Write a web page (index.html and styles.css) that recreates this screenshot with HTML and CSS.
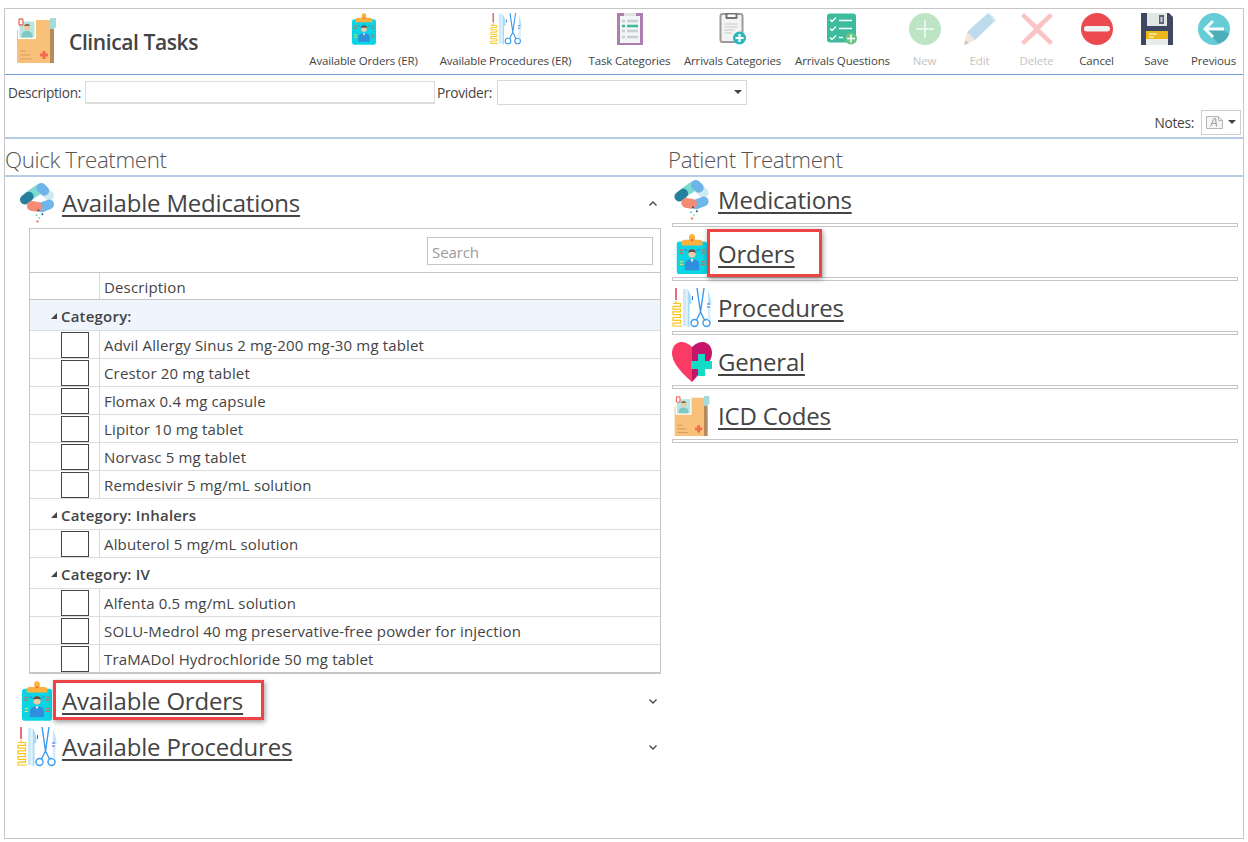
FILE: index.html
```html
<!DOCTYPE html>
<html lang="en">
<head>
<meta charset="utf-8">
<title>Clinical Tasks</title>
<link rel="stylesheet" href="styles.css">
</head>
<body>
<svg class="defs" width="0" height="0" aria-hidden="true">
  <symbol id="i-folder" viewBox="0 0 39 45">
    <path d="M0 12V45H37V16L33 2H17V12Z" fill="#f8c078"/>
    <path d="M33 2L37 0V45H33Z" fill="#b58a5c"/>
    <path d="M33 0H39V9L36.500 11L33 11Z" fill="#a3dcd8"/>
    <rect x="1" y="2" width="18" height="19" fill="#fff"/>
    <rect x="2.500" y="3.500" width="15" height="16" fill="#b9e6e0"/>
    <circle cx="10" cy="9" r="3" fill="#f3c9a0"/>
    <path d="M9 6a3 3 0 0 1 4 2l-6 0a3 3 0 0 1 2-2Z" fill="#8a6a4c"/>
    <path d="M4.500 19.500c0-5 2-6.500 5.500-6.500s5.500 1.500 5.500 6.500Z" fill="#7fc7c2"/>
    <rect x="2" y="1" width="4" height="6" rx="1" fill="#fff" stroke="#ef6a5a" stroke-width="1.300"/>
    <path d="M3 33h6M3 37h10M3 41h12" stroke="#d4a264" stroke-width="1.200"/>
    <path d="M23 37h8M27 33v8" stroke="#f56a4c" stroke-width="3"/>
  </symbol>
  <symbol id="i-badge" viewBox="0 0 32 42">
    <rect x="0" y="8" width="32" height="34" rx="3" fill="#0bd4e4"/>
    <path d="M13 3a3 3 0 0 1 6 0V6h5a3 3 0 0 1 3 3v3H5V9a3 3 0 0 1 3-3h5Z" fill="#fbb040"/>
    <circle cx="16" cy="6.500" r="1.200" fill="#f0603c"/>
    <circle cx="16" cy="21" r="3.800" fill="#f3cba8"/>
    <path d="M12 20a4 4 0 0 1 8 0c-2-1.500-6-1.500-8 0Z" fill="#665044"/>
    <path d="M8.500 38V32c0-3.500 3-5.500 7.500-5.500s7.500 2 7.500 5.500V38Z" fill="#2f8fdc"/>
    <path d="M14.500 26.500h3L16 30Z" fill="#fff"/>
    <path d="M2.500 17h4M2.500 20h4M25.500 17h4M25.500 20h4" stroke="#f0603c" stroke-width="1.300"/>
    <path d="M8 16l3 2M24 16l-3 2" stroke="#2f8fdc" stroke-width="1.200"/>
    <path d="M3 29h3.500M3 32h3.500" stroke="#fdd835" stroke-width="1.300"/>
    <path d="M25.500 29h4M25.500 32h4" stroke="#f0603c" stroke-width="1.300"/>
  </symbol>
  <symbol id="i-tools" viewBox="0 0 40 40">
    <path d="M4 0v12" stroke="#e8495a" stroke-width="1.600"/>
    <path d="M4 13v2.500H1M1 15.500h7.500v2.800H1v2.800h7.500v2.800H1v2.800h7.500v2.800H1v2.800h7.500v2.800H1V38h9" fill="none" stroke="#fcc419" stroke-width="1.200"/>
    <path d="M11 1h3.500v37H11Z" fill="#cfe9f8"/>
    <path d="M15.500 1c3 4 4 8 4 14l-2 2v22h-2Z" fill="#a8dcf6"/>
    <path d="M25 0l3.500 24M32 0l-3.500 24" stroke="#3b9bf0" stroke-width="1.400" fill="none"/>
    <path d="M28.500 24l-4 8M28.500 24l4 8" stroke="#3b9bf0" stroke-width="1.400"/>
    <circle cx="22.500" cy="35" r="3.500" fill="#fff" stroke="#3b9bf0" stroke-width="1.400"/>
    <circle cx="34.500" cy="35" r="3.500" fill="#fff" stroke="#3b9bf0" stroke-width="1.400"/>
    <path d="M36 2c2 6 3.500 10 3.500 15H36Z" fill="#bfe4f8"/>
    <path d="M36 18h2.500v14H36Z" fill="#d7eefa"/>
    <path d="M20.500 8v4M35 16h3M35 19h3" stroke="#3f6fd0" stroke-width="1"/>
  </symbol>
  <symbol id="i-clip" viewBox="0 0 26 32">
    <rect width="26" height="32" fill="#ac7fb0"/>
    <rect x="3" y="3" width="20" height="27" fill="#f2f4f5"/>
    <rect x="7" y="0" width="12" height="3" fill="#dfe3e6"/>
    <path d="M5 8h3M10 8h11M5 18h3M10 18h11M5 24h3M10 24h11" stroke="#c7cdd2" stroke-width="2.600"/>
    <path d="M5 13h3M10 13h11" stroke="#3db894" stroke-width="2.600"/>
  </symbol>
  <symbol id="i-doc" viewBox="0 0 27 32">
    <rect x="1" y="1" width="22" height="28" rx="2" fill="#f3f3f3" stroke="#9b9b9b" stroke-width="2"/>
    <path d="M6 0h12v5a1 1 0 0 1-1 1H7a1 1 0 0 1-1-1Z" fill="#6f7378"/>
    <rect x="8" y="1.500" width="8" height="2.500" fill="#fff"/>
    <path d="M5 11h13M5 14h13M5 17h10M5 20h7" stroke="#c9c9c9" stroke-width="1"/>
    <circle cx="20" cy="25" r="6.500" fill="#2bb7bd"/>
    <path d="M20 21v8M16 25h8" stroke="#fff" stroke-width="2.200"/>
  </symbol>
  <symbol id="i-check" viewBox="0 0 32 31">
    <rect width="29" height="29" rx="3" fill="#3dbb9d"/>
    <path d="M3 6l2 2 4-4M3 15l2 2 4-4M3 24l2 2 4-4" fill="none" stroke="#fff" stroke-width="1.300"/>
    <path d="M12 7h13M12 15h13M12 24h4" stroke="#fff" stroke-width="1.300"/>
    <circle cx="24" cy="25" r="6" fill="#6cc287"/>
    <path d="M24 21v8M20 25h8" stroke="#fff" stroke-width="1.500"/>
  </symbol>
  <symbol id="i-new" viewBox="0 0 32 32">
    <circle cx="16" cy="16" r="16" fill="#bde5c5"/>
    <path d="M16 7v18M7 16h18" stroke="#f2faf4" stroke-width="1.500"/>
  </symbol>
  <symbol id="i-edit" viewBox="0 0 32 32">
    <path d="M24 0l8 7L11 27 3 19Z" fill="#bcdcec"/>
    <path d="M3 19l8 8-11 5Z" fill="#f4e6da"/>
    <path d="M0 32l1.500-5 3.500 3.500Z" fill="#c9c9c9"/>
    <path d="M24 0l3 1.500 5 5.500-1.500 1.500Z" fill="#d6e9f2"/>
  </symbol>
  <symbol id="i-delete" viewBox="0 0 32 32">
    <path d="M3 0L16 12 29 0l3 3L19 16l13 13-3 3L16 20 3 32l-3-3L13 16 0 3Z" fill="#fbc4c4"/>
  </symbol>
  <symbol id="i-cancel" viewBox="0 0 32 32">
    <circle cx="16" cy="16" r="16" fill="#ed4a50"/>
    <rect x="3" y="13" width="26" height="5.500" rx="2.700" fill="#f2f2f2"/>
  </symbol>
  <symbol id="i-save" viewBox="0 0 32 32">
    <path d="M0 0h28l4 4v28H0Z" fill="#3f4860"/>
    <rect x="6" y="0" width="20" height="13" fill="#e2e7e6"/>
    <rect x="18" y="2" width="5" height="9" fill="#5a6278"/>
    <rect x="19.500" y="4" width="2" height="5" fill="#d0d4d8"/>
    <rect x="5" y="18" width="22" height="14" fill="#e8ecea"/>
    <rect x="5" y="18" width="22" height="8" fill="#ecb91a"/>
    <path d="M8 21h8M8 24h5" stroke="#fff" stroke-width="1.200"/>
  </symbol>
  <symbol id="i-prev" viewBox="0 0 32 32">
    <circle cx="16" cy="16" r="16" fill="#66ccd6"/>
    <path d="M8 16L20 30.500A16 16 0 0 0 31 21L24 16Z" fill="#4aafba"/>
    <path d="M15 8l-8 8 8 8M7 16h19" fill="none" stroke="#f4fbfc" stroke-width="3"/>
  </symbol>
  <symbol id="i-pills" viewBox="0 0 36 41">
    <path d="M11 12L20 6" stroke="#7ddad0" stroke-width="10" stroke-linecap="round"/>
    <path d="M25 9L30 13" stroke="#cdeaf0" stroke-width="10" stroke-linecap="round"/>
    <path d="M22 5L25 8" stroke="#6fb4e8" stroke-width="10" stroke-linecap="round"/>
    <path d="M5 17L9 14" stroke="#24809c" stroke-width="10" stroke-linecap="round"/>
    <path d="M22 25L30 22" stroke="#6fb6ea" stroke-width="10" stroke-linecap="round"/>
    <path d="M12 23.500L18 24.500" stroke="#f58b73" stroke-width="10" stroke-linecap="round"/>
    <circle cx="19" cy="28" r="1" fill="#1d5f78"/>
    <circle cx="23" cy="32" r="1" fill="#1d5f78"/>
    <circle cx="17" cy="33" r="1.100" fill="#7ddad0"/>
    <circle cx="20" cy="36" r="1" fill="#7ddad0"/>
    <circle cx="18" cy="39.500" r="1.300" fill="#f58b73"/>
  </symbol>
  <symbol id="i-heart" viewBox="0 0 40 40">
    <path d="M20 5C16 1 12 0 9 0 4 0 0 5 0 11c0 11 12 22 20 29Z" fill="#fb3a66"/>
    <path d="M20 5c4-4 8-5 11-5 5 0 9 5 9 11 0 4-2 8-4 11L20 40Z" fill="#c5146a"/>
    <path d="M26 12h7v7h7v8h-7v7h-7v-7h-7v-8h7Z" fill="#12dcc6"/>
  </symbol>
</svg>

<main class="frame">
  <header class="header">
    <svg class="logo"><use href="#i-folder"/></svg>
    <h1 class="title">Clinical Tasks</h1>
    <nav class="toolbar">
      <a class="tool"><svg class="tool-icon icon-badge"><use href="#i-badge"/></svg><span>Available Orders (ER)</span></a>
      <a class="tool"><svg class="tool-icon icon-tools"><use href="#i-tools"/></svg><span>Available Procedures (ER)</span></a>
      <a class="tool"><svg class="tool-icon"><use href="#i-clip"/></svg><span>Task Categories</span></a>
      <a class="tool"><svg class="tool-icon"><use href="#i-doc"/></svg><span>Arrivals Categories</span></a>
      <a class="tool"><svg class="tool-icon"><use href="#i-check"/></svg><span>Arrivals Questions</span></a>
      <a class="tool is-disabled"><svg class="tool-icon"><use href="#i-new"/></svg><span>New</span></a>
      <a class="tool is-disabled"><svg class="tool-icon"><use href="#i-edit"/></svg><span>Edit</span></a>
      <a class="tool is-disabled"><svg class="tool-icon"><use href="#i-delete"/></svg><span>Delete</span></a>
      <a class="tool"><svg class="tool-icon"><use href="#i-cancel"/></svg><span>Cancel</span></a>
      <a class="tool"><svg class="tool-icon"><use href="#i-save"/></svg><span>Save</span></a>
      <a class="tool"><svg class="tool-icon"><use href="#i-prev"/></svg><span>Previous</span></a>
    </nav>
  </header>

  <section class="filters">
    <div class="filter-row">
      <label class="field-label">Description:</label>
      <div class="input"></div>
      <label class="field-label">Provider:</label>
      <div class="select"><i class="caret"></i></div>
    </div>
    <div class="notes-row">
      <span class="notes-label">Notes:</span>
      <div class="notes-btn">
        <svg class="notes-icon" viewBox="0 0 17 13"><path d="M.5.500h12l4 4v8H.5Z" fill="#f4f4f4" stroke="#b5b5b5"/><path d="M12.500.500v4h4" fill="none" stroke="#b5b5b5"/><path d="M4.500 10.500L8 2.500h1.500l1 8M6 7.500h4" fill="none" stroke="#9a9a9a"/></svg>
        <i class="caret"></i>
      </div>
    </div>
  </section>

  <div class="section-heads">
    <h2 class="section-head head-left">Quick Treatment</h2>
    <h2 class="section-head head-right">Patient Treatment</h2>
  </div>

  <div class="columns">
    <section class="col-left">
      <div class="acc-head">
        <svg class="acc-icon icon-pills"><use href="#i-pills"/></svg>
        <a class="link">Available Medications</a>
        <svg class="chev" viewBox="0 0 8 5"><path d="M.5 4.500L4 1l3.500 3.500" fill="none" stroke="#444" stroke-width="1.300"/></svg>
      </div>

      <div class="grid">
        <div class="grid-search"><div class="search">Search</div></div>
        <div class="row grid-head"><div class="cell-check"></div><div class="cell-text">Description</div></div>
        <div class="group is-active"><i class="tri"></i>Category:</div>
        <div class="row"><div class="cell-check"><span class="box"></span></div><div class="cell-text">Advil Allergy Sinus 2 mg-200 mg-30 mg tablet</div></div>
        <div class="row"><div class="cell-check"><span class="box"></span></div><div class="cell-text">Crestor 20 mg tablet</div></div>
        <div class="row"><div class="cell-check"><span class="box"></span></div><div class="cell-text">Flomax 0.4 mg capsule</div></div>
        <div class="row"><div class="cell-check"><span class="box"></span></div><div class="cell-text">Lipitor 10 mg tablet</div></div>
        <div class="row"><div class="cell-check"><span class="box"></span></div><div class="cell-text">Norvasc 5 mg tablet</div></div>
        <div class="row"><div class="cell-check"><span class="box"></span></div><div class="cell-text">Remdesivir 5 mg/mL solution</div></div>
        <div class="group"><i class="tri"></i>Category: Inhalers</div>
        <div class="row"><div class="cell-check"><span class="box"></span></div><div class="cell-text">Albuterol 5 mg/mL solution</div></div>
        <div class="group"><i class="tri"></i>Category: IV</div>
        <div class="row"><div class="cell-check"><span class="box"></span></div><div class="cell-text">Alfenta 0.5 mg/mL solution</div></div>
        <div class="row"><div class="cell-check"><span class="box"></span></div><div class="cell-text">SOLU-Medrol 40 mg preservative-free powder for injection</div></div>
        <div class="row"><div class="cell-check"><span class="box"></span></div><div class="cell-text">TraMADol Hydrochloride 50 mg tablet</div></div>
      </div>

      <div class="acc-head acc-orders">
        <svg class="acc-icon icon-orders"><use href="#i-badge"/></svg>
        <a class="link">Available Orders</a>
        <span class="mark mark-left"></span>
        <svg class="chev" viewBox="0 0 8 5"><path d="M.5.500L4 4 7.500.500" fill="none" stroke="#444" stroke-width="1.300"/></svg>
      </div>
      <div class="acc-head">
        <svg class="acc-icon icon-procs"><use href="#i-tools"/></svg>
        <a class="link">Available Procedures</a>
        <svg class="chev" viewBox="0 0 8 5"><path d="M.5.500L4 4 7.500.500" fill="none" stroke="#444" stroke-width="1.300"/></svg>
      </div>
    </section>

    <section class="col-right">
      <div class="pt-row"><svg class="pt-icon"><use href="#i-pills"/></svg><a class="link">Medications</a></div>
      <div class="rule"></div>
      <div class="pt-row"><svg class="pt-icon"><use href="#i-badge"/></svg><a class="link">Orders</a><span class="mark mark-right"></span></div>
      <div class="rule"></div>
      <div class="pt-row"><svg class="pt-icon"><use href="#i-tools"/></svg><a class="link">Procedures</a></div>
      <div class="rule"></div>
      <div class="pt-row"><svg class="pt-icon"><use href="#i-heart"/></svg><a class="link">General</a></div>
      <div class="rule"></div>
      <div class="pt-row"><svg class="pt-icon"><use href="#i-folder"/></svg><a class="link">ICD Codes</a></div>
      <div class="rule"></div>
    </section>
  </div>
</main>
</body>
</html>
```

FILE: styles.css
```css
* { box-sizing: border-box; }
html, body { height: 100%; }
body {
  margin: 0;
  padding: 8px 4px 3px;
  background: #fff;
  color: #444;
  font-family: "Open Sans", "Noto Sans", sans-serif;
  font-size: 14px;
  overflow: hidden;
}
.defs { position: absolute; }
.frame {
  width: 1240px;
  height: 831px;
  border: 1px solid #c6c6c6;
  display: flex;
  flex-direction: column;
}

/* header */
.header {
  height: 66px;
  flex: none;
  display: flex;
  border-bottom: 1px solid #6d9bd1;
}
.logo { width: 39px; height: 45px; margin: 9px 0 0 12px; flex: none; }
.title {
  margin: 20px 0 0 13px;
  width: 240px;
  flex: none;
  font-size: 21px;
  line-height: 26px;
  font-weight: 600;
  color: #444;
  letter-spacing: -.4px;
}
.toolbar {
  display: grid;
  grid-template-columns: 127px 157px 91px 115px 105px 59px 51px 63px 57px 63px 51px;
  flex: none;
  margin-left: -9px;
}
.tool {
  display: flex;
  flex-direction: column;
  align-items: center;
  font-size: 11.500px;
  color: #444;
  white-space: nowrap;
  letter-spacing: -.15px;
}
.tool span { margin-top: 8px; line-height: 16px; }
.tool-icon { width: 32px; height: 32px; margin-top: 4px; flex: none; }
.icon-badge { width: 24px; }
.is-disabled { color: #c4c4c4; }

/* filters */
.filters {
  height: 64px;
  flex: none;
  border-bottom: 2px solid #b5cbe6;
}
.filter-row {
  display: flex;
  align-items: center;
  height: 24px;
  margin-top: 5px;
  padding-left: 3px;
}
.field-label {
  font-size: 13.700px;
  letter-spacing: -.3px;
  white-space: nowrap;
  padding-top: 1px;
}
.input {
  width: 350px;
  height: 23px;
  margin: 0 2px 0 4px;
  border: 1px solid #dcdcdc;
  border-bottom-width: 2px;
}
.select {
  width: 250px;
  height: 25px;
  margin-left: 5px;
  border: 1px solid #d8d8d8;
  display: flex;
  align-items: center;
  justify-content: flex-end;
  padding-right: 4px;
}
.caret {
  width: 0;
  height: 0;
  border-left: 4px solid transparent;
  border-right: 4px solid transparent;
  border-top: 4px solid #444;
}
.notes-row {
  display: flex;
  justify-content: flex-end;
  align-items: center;
  margin-top: 6px;
  padding-right: 2px;
  height: 24px;
}
.notes-label { font-size: 13.700px; letter-spacing: -.3px; margin-right: 7px; }
.notes-btn {
  width: 40px;
  height: 25px;
  border: 1px solid #cfcfcf;
  display: flex;
  align-items: center;
  justify-content: space-between;
  padding: 0 4px;
}
.notes-icon { width: 17px; height: 13px; }

/* section heads */
.section-heads {
  display: flex;
  height: 38px;
  flex: none;
  border-bottom: 2px solid #b5cbe6;
}
.section-head {
  margin: 0;
  font-size: 22.300px;
  font-weight: 300;
  line-height: 42px;
  color: #555;
  letter-spacing: -.35px;
  white-space: nowrap;
}
.head-left { width: 663px; }

/* columns */
.columns { display: flex; flex: 1; min-height: 0; }
.col-left { width: 667px; flex: none; padding-left: 11px; }
.col-right { flex: 1; padding-right: 5px; }

.link {
  font-size: 24px;
  line-height: 30px;
  color: #444;
  text-decoration: underline;
  text-decoration-thickness: 1.500px;
  text-underline-offset: 3px;
  white-space: nowrap;
  letter-spacing: -.2px;
}
.acc-head {
  position: relative;
  display: flex;
  align-items: center;
  height: 46px;
  margin-top: 3px;
  padding-right: 2px;
}
.acc-orders { margin-top: 4px; }
.acc-orders + .acc-head { margin-top: 0; }
.acc-icon { width: 35px; height: 40px; flex: none; margin-right: 7px; margin-left: 4px; }
.icon-orders { width: 30px; margin-left: 6px; margin-right: 10px; }
.icon-procs { width: 40px; margin-left: 1px; margin-right: 5px; }
.chev { width: 8px; height: 5px; margin-left: auto; margin-right: 13px; }

.grid {
  margin-left: 13px;
  margin-top: 2px;
  width: 632px;
  height: 446px;
  border: 1px solid #c6c6c6;
  border-bottom-width: 2px;
}
.grid-search {
  height: 44px;
  border-bottom: 1px solid #c6c6c6;
  display: flex;
  justify-content: flex-end;
  padding: 8px 7px 0 0;
}
.search {
  width: 226px;
  height: 28px;
  border: 1px solid #c6c6c6;
  color: #9a9a9a;
  font-size: 15px;
  line-height: 29px;
  padding-left: 4px;
  letter-spacing: -.1px;
}
.row {
  display: flex;
  height: 28px;
  border-bottom: 1px solid #dcdcdc;
}
.row:last-child { border-bottom: 0; }
.grid-head { height: 27px; border-bottom-color: #c6c6c6; }
.cell-check {
  width: 70px;
  flex: none;
  border-right: 1px solid #d4d8e0;
  display: flex;
  align-items: center;
  justify-content: flex-end;
  padding-right: 10px;
}
.cell-text {
  padding-left: 4px;
  font-size: 15px;
  line-height: 28px;
  white-space: nowrap;
  letter-spacing: .15px;
}
.box {
  width: 28px;
  height: 26px;
  border: 1px solid #444;
}
.group {
  display: flex;
  align-items: center;
  height: 31px;
  padding: 1px 0 0 21px;
  font-size: 15px;
  font-weight: 600;
  letter-spacing: .2px;
  border-bottom: 1px solid #dcdcdc;
}
.is-active { background: #eef5fc; }
.tri {
  width: 0;
  height: 0;
  margin-right: 4px;
  border-style: solid;
  border-width: 0 0 6px 6px;
  border-color: transparent transparent #444 transparent;
}

/* right column */
.pt-row {
  position: relative;
  display: flex;
  align-items: center;
  height: 46px;
}
.pt-icon { width: 40px; height: 40px; flex: none; margin-right: 6px; }
.rule {
  height: 4px;
  margin-bottom: 4px;
  border: 1px solid #c6c6c6;
}

/* annotation marks */
.mark {
  position: absolute;
  border: 3px solid #ef4444;
  box-shadow: 1px 2px 5px rgba(0, 0, 0, .4);
  pointer-events: none;
}
.mark-left { left: 37px; top: 2px; width: 211px; height: 40px; }
.mark-right { left: 35px; top: -2px; width: 115px; height: 48px; }
```
